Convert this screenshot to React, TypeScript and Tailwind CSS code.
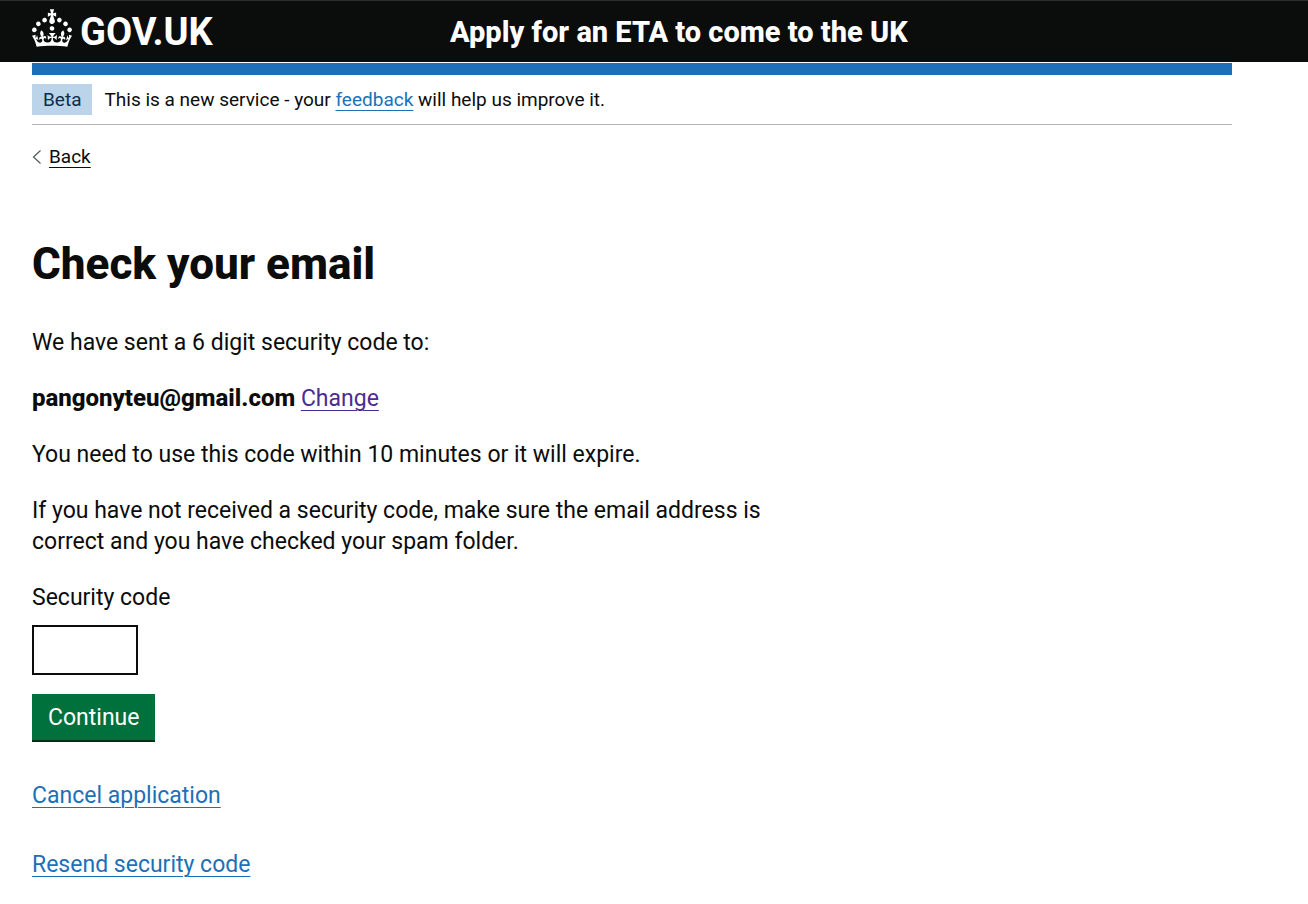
import type { ReactNode } from 'react';

const CROWN_PATH =
    'M22.6 10.4c-1 .4-2-.1-2.4-1-.4-.9.1-2 1-2.4.9-.4 2 .1 2.4 1s-.1 2-1 2.4m-5.9 6.7c-.9.4-2-.1-2.4-1-.4-.9.1-2 1-2.4.9-.4 2 .1 2.4 1s-.1 2-1 2.4m10.8-3.7c-1 .4-2-.1-2.4-1-.4-.9.1-2 1-2.4.9-.4 2 .1 2.4 1s0 2-1 2.4m3.3 4.8c-1 .4-2-.1-2.4-1-.4-.9.1-2 1-2.4.9-.4 2 .1 2.4 1s-.1 2-1 2.4M17 4.7l2.3 1.2V2.5l-2.3.7-.2-.2.9-3h-3.4l.9 3-.2.2c-.1.1-2.3-.7-2.3-.7v3.4L15 4.7c.1.1.1.2.2.2l-1.3 4c-.1.2-.1.4-.1.6 0 1.1.8 2 1.9 2.2h.7c1-.2 1.9-1.1 1.9-2.1 0-.2 0-.4-.1-.6l-1.3-4c-.1-.2 0-.2.1-.3m-7.6 5.7c.9.4 2-.1 2.4-1 .4-.9-.1-2-1-2.4-.9-.4-2 .1-2.4 1s0 2 1 2.4m-5 3c.9.4 2-.1 2.4-1 .4-.9-.1-2-1-2.4-.9-.4-2 .1-2.4 1s.1 2 1 2.4m-3.2 4.8c.9.4 2-.1 2.4-1 .4-.9-.1-2-1-2.4-.9-.4-2 .1-2.4 1s0 2 1 2.4m14.8 11c4.4 0 8.6.3 12.3.8 1.1-4.5 2.4-7 3.7-8.8l-2.5-.9c.2 1.3.3 1.9 0 2.7-.4-.4-.8-1.1-1.1-2.3l-1.2 4c.7-.5 1.3-.8 2-.9-1.1 2.5-2.6 3.1-3.5 3-1.1-.2-1.7-1.2-1.5-2.1.3-1.2 1.5-1.5 2.1-.1 1.1-2.3-.8-3-2-2.3 1.9-1.9 2.1-3.5.6-5.6-2.1 1.6-2.1 3.2-1.2 5.5-1.2-1.4-3.2-.6-2.5 1.6.9-1.4 2.1-.5 1.9.8-.2 1.1-1.7 2.1-3.5 1.9-2.7-.2-2.9-2.1-2.9-3.6.7-.1 1.9.5 2.9 1.9l.4-4.3c-1.1 1.1-2.1 1.4-3.2 1.4.4-1.2 2.1-3 2.1-3h-5.4s1.7 1.9 2.1 3c-1.1 0-2.1-.2-3.2-1.4l.4 4.3c1-1.4 2.2-2 2.9-1.9-.1 1.5-.2 3.4-2.9 3.6-1.9.2-3.4-.8-3.5-1.9-.2-1.3 1-2.2 1.9-.8.7-2.3-1.2-3-2.5-1.6.9-2.2.9-3.9-1.2-5.5-1.5 2-1.3 3.7.6 5.6-1.2-.7-3.1 0-2 2.3.6-1.4 1.8-1.1 2.1.1.2.9-.3 1.9-1.5 2.1-.9.2-2.4-.5-3.5-3 .6 0 1.2.3 2 .9l-1.2-4c-.3 1.1-.7 1.9-1.1 2.3-.3-.8-.2-1.4 0-2.7l-2.9.9C1.3 23 2.6 25.5 3.7 30c3.7-.5 7.9-.8 12.3-.8';

function TextLink({ children }: { children: ReactNode }) {
    return (
        <a href="#" className="text-[#1d70b8] underline decoration-1 underline-offset-4">
            {children}
        </a>
    );
}

function Header() {
    return (
        <header className="border-t border-[#2b2c2c] bg-[#0b0c0c] text-white">
            <div className="mx-8 flex h-[61px] max-w-[1200px] items-center">
                <a href="#" className="flex w-[418px] items-center gap-2">
                    <svg viewBox="0 0 32 30" className="mb-2 h-[38px] w-10 shrink-0" fill="currentColor" aria-hidden="true">
                        <path d={CROWN_PATH} />
                    </svg>
                    <span className="text-[38px] leading-[38px] font-bold">GOV.UK</span>
                </a>
                <a href="#" className="text-[29px] leading-8 font-extrabold">
                    Apply for an ETA to come to the UK
                </a>
            </div>
        </header>
    );
}

function PhaseBanner() {
    return (
        <div className="flex items-center gap-3 border-b border-[#b1b4b6] py-[9px] text-[19px] leading-[31px]">
            <strong className="bg-[#bbd4ea] px-[11px] font-normal text-[#0c2d4a]">Beta</strong>
            <span>
                This is a new service - your <TextLink>feedback</TextLink> will help us improve it.
            </span>
        </div>
    );
}

export default function App() {
    return (
        <div className="font-['Roboto',sans-serif] text-[#0b0c0c]">
            <Header />

            <div className="mx-8 mt-px max-w-[1200px]">
                <div className="h-3 bg-[#1d70b8]" />
                <PhaseBanner />

                <a href="#" className="mt-[18px] inline-flex items-center gap-2 text-[19px] leading-7">
                    <svg viewBox="0 0 9 14" className="h-[14px] w-[9px]" fill="none" stroke="#505a5f" strokeWidth="1.2" aria-hidden="true">
                        <path d="M8.5 .5 1.5 7l7 6.5" />
                    </svg>
                    <span className="underline decoration-1 underline-offset-4">Back</span>
                </a>

                <main className="mt-[65px] max-w-[780px] text-[23px] leading-[31px]">
                    <h1 className="mb-[35px] text-[44px] leading-[56px] font-extrabold">Check your email</h1>

                    <div className="flex flex-col gap-[25px]">
                        <p>We have sent a 6 digit security code to:</p>
                        <p>
                            <b className="text-[24px] font-extrabold">pangonyteu@gmail.com</b>{' '}
                            <a href="#" className="text-[#4c2c92] underline decoration-1 underline-offset-4">
                                Change
                            </a>
                        </p>
                        <p>You need to use this code within 10 minutes or it will expire.</p>
                        <p>
                            If you have not received a security code, make sure the email address is correct and you have
                            checked your spam folder.
                        </p>
                    </div>

                    <form className="mt-[25px] flex flex-col items-start" onSubmit={(e) => e.preventDefault()}>
                        <label htmlFor="security-code">Security code</label>
                        <input
                            id="security-code"
                            type="text"
                            inputMode="numeric"
                            maxLength={6}
                            className="mt-3 h-[50px] w-[106px] border-2 border-[#0b0c0c] px-1 outline-none"
                        />
                        <button type="submit" className="mt-[19px] h-12 border-b-2 border-[#002d18] bg-[#00703c] px-4 text-white">
                            Continue
                        </button>
                    </form>

                    <div className="mt-[38px] flex flex-col items-start gap-[38px]">
                        <TextLink>Cancel application</TextLink>
                        <TextLink>Resend security code</TextLink>
                    </div>
                </main>
            </div>
        </div>
    );
}
